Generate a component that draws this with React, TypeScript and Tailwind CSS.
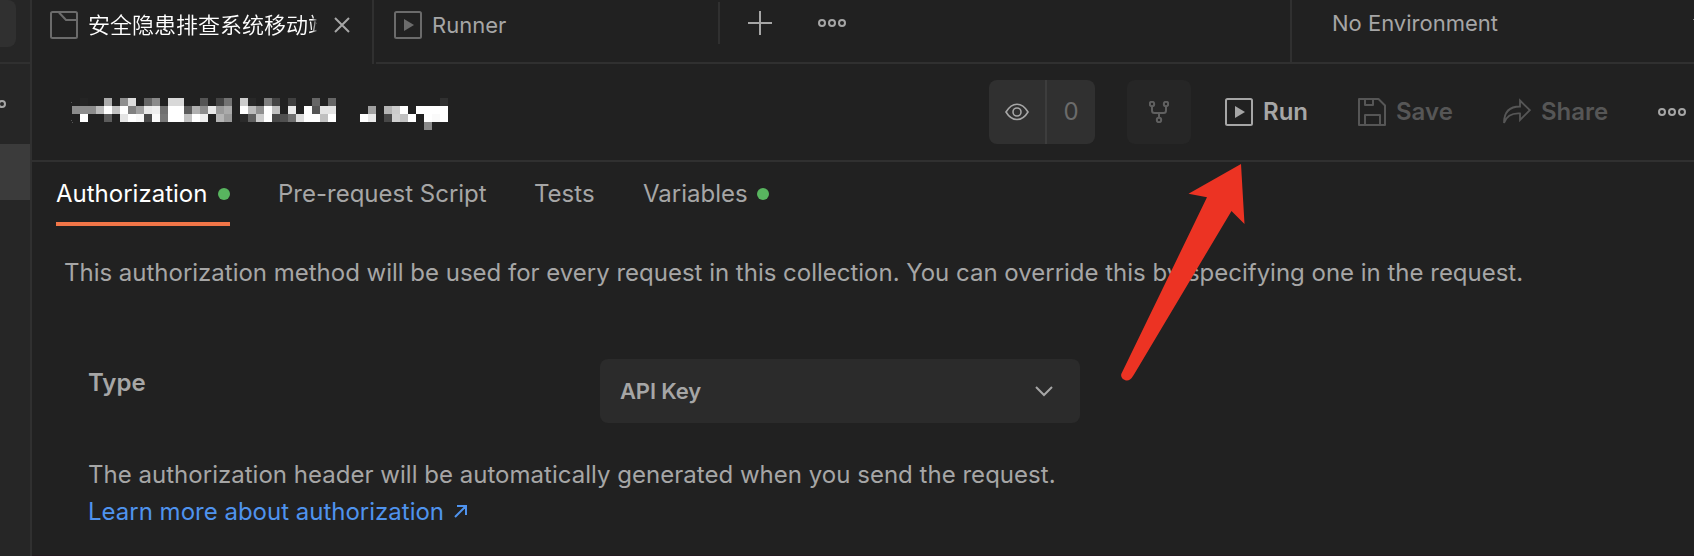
import React from "react";

type Cell = [number, string];

const mosaicRows: Cell[][] = [
  [[1, "#242424"], [4, "#ababab"], [6, "#8f8f8f"], [7, "#dddddd"], [9, "#666666"], [10, "#8a8a8a"], [12, "#d8d8d8"], [13, "#d8d8d8"], [16, "#555555"], [18, "#444444"], [19, "#737373"], [21, "#cccccc"], [22, "#282828"], [24, "#808080"], [25, "#444444"], [27, "#404040"], [30, "#666666"], [32, "#666666"], [46, "#303030"]],
  [[0, "#8c8c8c"], [1, "#8c8c8c"], [2, "#8c8c8c"], [3, "#bbbbbb"], [4, "#ffffff"], [5, "#c0c0c0"], [6, "#ffffff"], [7, "#808080"], [8, "#a0a0a0"], [9, "#e8e8e8"], [10, "#eeeeee"], [11, "#707070"], [12, "#ffffff"], [13, "#ffffff"], [14, "#5c5c5c"], [15, "#b0b0b0"], [16, "#8c8c8c"], [17, "#e8e8e8"], [18, "#999999"], [19, "#aaaaaa"], [21, "#ffffff"], [22, "#bbbbbb"], [23, "#909090"], [24, "#ffffff"], [25, "#c0c0c0"], [27, "#eaeaea"], [29, "#ffffff"], [30, "#555555"], [31, "#e4e4e4"], [32, "#e4e4e4"], [37, "#a0a0a0"], [39, "#b4b4b4"], [40, "#cccccc"], [41, "#ffffff"], [43, "#ffffff"], [44, "#ffffff"], [45, "#ffffff"], [46, "#ffffff"]],
  [[1, "#ffffff"], [4, "#5c5c5c"], [6, "#e4e4e4"], [7, "#ffffff"], [8, "#f8f8f8"], [9, "#484848"], [10, "#fafafa"], [11, "#777777"], [12, "#ffffff"], [13, "#ffffff"], [14, "#c0c0c0"], [15, "#ffffff"], [16, "#eeeeee"], [18, "#b4b4b4"], [19, "#999999"], [21, "#2a2a2a"], [22, "#606060"], [23, "#cccccc"], [24, "#ffffff"], [25, "#484848"], [26, "#505050"], [27, "#707070"], [28, "#dddddd"], [29, "#ffffff"], [30, "#ffffff"], [31, "#c0c0c0"], [32, "#ffffff"], [36, "#ffffff"], [37, "#e8e8e8"], [39, "#484848"], [40, "#d0d0d0"], [41, "#c0c0c0"], [42, "#ffffff"], [44, "#ffffff"], [45, "#fafafa"], [46, "#ffffff"]],
  [[44, "#888888"]],
];

function MaskedTitle() {
  return (
    <svg width="378" height="32" viewBox="-2 0 378 32" shapeRendering="crispEdges" className="shrink-0">
      {mosaicRows.map((row, y) =>
        row.map(([x, fill]) => <rect key={`${x}-${y}`} x={x * 8} y={y * 8} width="8" height="8" fill={fill} />),
      )}
      <path d="M-1 4h1v1h-1zM-1 22h1v1h-1zM0 24h1v1h-1z" fill="#555" />
    </svg>
  );
}

function PlayIcon({ className }: { className: string }) {
  return (
    <svg width="28" height="28" viewBox="0 0 28 28" className={className}>
      <rect x="1" y="1" width="26" height="26" rx="1.5" fill="none" stroke="currentColor" strokeWidth="2" />
      <path d="M10 8v12l10-6z" fill="currentColor" />
    </svg>
  );
}

function Dots() {
  return (
    <svg width="28" height="8" viewBox="0 0 28 8" fill="none" stroke="#a6a6a6" strokeWidth="2" className="shrink-0">
      <circle cx="4" cy="4" r="3" />
      <circle cx="14" cy="4" r="3" />
      <circle cx="24" cy="4" r="3" />
    </svg>
  );
}

function Sidebar() {
  return (
    <aside className="flex h-full w-8 shrink-0 flex-col border-r-2 border-[#303030] bg-[#262626]">
      <div className="h-16 border-b-2 border-[#303030]">
        <div className="h-[47px] w-4 rounded-r-lg bg-[#303030]" />
      </div>
      <div className="flex h-20 items-center overflow-hidden">
        <svg width="6" height="8" viewBox="0 0 6 8" fill="none" stroke="#a6a6a6" strokeWidth="2">
          <circle cx="2" cy="4" r="3" />
        </svg>
      </div>
      <div className="h-14 bg-[#3b3b3b]" />
    </aside>
  );
}

function TabBar() {
  return (
    <div className="flex h-16 shrink-0">
      <div className="flex w-[342px] border-r-2 border-[#303030] pt-[11px] pl-[18px]">
        <svg width="28" height="28" viewBox="0 0 28 28" fill="none" stroke="#6b6b6b" strokeWidth="2" className="shrink-0">
          <rect x="1" y="1" width="26" height="26" rx="1.5" />
          <path d="M9 1.500l7 7.500h11" />
        </svg>
        <div className="ml-[10px] h-7 w-[229px] overflow-hidden mask-r-from-[224px] mask-r-to-[230px] text-[22px] leading-7 font-[350] whitespace-nowrap text-white">
          安全隐患排查系统移动端
        </div>
        <svg width="16" height="16" viewBox="0 0 16 16" stroke="#a6a6a6" strokeWidth="2" className="mt-[6px] ml-[17px] shrink-0">
          <path d="M1 1l14 14M15 1L1 15" />
        </svg>
      </div>
      <div className="ml-[2px] flex flex-1 border-b-2 border-[#303030]">
        <div className="mt-[2px] flex h-[42px] w-[344px] border-r-2 border-[#303030] pt-[9px] pl-[18px]">
          <PlayIcon className="shrink-0 text-[#6b6b6b]" />
          <span className="ml-[10px] text-[22px] leading-7 text-[#a6a6a6]">Runner</span>
        </div>
        <svg width="24" height="24" viewBox="0 0 24 24" stroke="#a6a6a6" strokeWidth="2" className="mt-[11px] ml-[28px]">
          <path d="M12 0v24M0 12h24" />
        </svg>
        <div className="mt-[19px] ml-[46px] flex">
          <Dots />
        </div>
        <div className="ml-auto flex h-[62px] w-[404px] border-l-2 border-[#303030] pl-[40px]">
          <span className="pt-[9px] text-[22px] leading-7 text-[#a6a6a6]">No Environment</span>
          <svg width="1" height="2" viewBox="0 0 1 2" className="mt-[19px] ml-auto">
            <rect width="1" height="1" fill="#8a8a8a" />
          </svg>
        </div>
      </div>
    </div>
  );
}

function Header() {
  return (
    <div className="flex h-[98px] shrink-0 items-start border-b-2 border-[#303030] pl-[38px]">
      <div className="mt-[34px]">
        <MaskedTitle />
      </div>
      <div className="mt-4 ml-[541px] flex h-16 w-[106px] shrink-0 overflow-hidden rounded-lg bg-[#303030]">
        <div className="flex w-[58px] items-center justify-center border-r-2 border-[#3d3d3d]">
          <svg width="24" height="18" viewBox="0 0 24 18" fill="none" stroke="#a6a6a6" strokeWidth="1.6">
            <path d="M1 9C4 4 7.500 1.200 12 1.200S20 4 23 9C20 14 16.500 16.500 12 16.500S4 14 1 9z" />
            <circle cx="12" cy="9" r="4" />
          </svg>
        </div>
        <div className="flex flex-1 items-center justify-center text-[24px] text-[#6b6b6b]">0</div>
      </div>
      <div className="mt-4 ml-8 flex h-16 w-16 shrink-0 items-center justify-center rounded-lg bg-[#262626]">
        <svg width="20" height="22" viewBox="0 0 20 22" fill="none" stroke="#606060" strokeWidth="2">
          <circle cx="3" cy="3" r="2.200" />
          <circle cx="17" cy="3" r="2.200" />
          <circle cx="10" cy="19" r="2.200" />
          <path d="M3 5.200V9.500Q3 12 5.500 12H14.500Q17 12 17 9.500V5.200M10 12V16.800" />
        </svg>
      </div>
      <div className="mt-8 ml-[34px] flex h-8 items-center text-[24px] font-semibold text-[#a6a6a6]">
        <PlayIcon className="shrink-0" />
        <span className="ml-[10px] w-[95px]">Run</span>
      </div>
      <div className="mt-8 flex h-8 items-center text-[24px] font-semibold text-[#565656]">
        <svg width="28" height="28" viewBox="0 0 28 28" fill="none" stroke="currentColor" strokeWidth="2" strokeLinejoin="round" className="shrink-0">
          <path d="M1 1h19.500L27 7.500V27H1z" />
          <path d="M7 1v6h8V1M7 27V17h15v10" />
        </svg>
        <span className="ml-[10px] w-[107px]">Save</span>
      </div>
      <div className="mt-8 flex h-8 items-center text-[24px] font-semibold text-[#565656]">
        <svg width="28" height="28" viewBox="0 0 28 28" fill="none" stroke="currentColor" strokeWidth="1.800" className="shrink-0">
          <path d="M17 2.500L26.800 12.200L17 22V15.500C9 15 3.500 18 1 25C1 15 6 8.500 17 8.500z" />
        </svg>
        <span className="ml-[10px] w-[117px]">Share</span>
      </div>
      <div className="mt-11 flex">
        <Dots />
      </div>
    </div>
  );
}

function StatusDot() {
  return <span className="mt-[6px] h-3 w-3 rounded-full bg-[#58b55f]" />;
}

function SectionTabs() {
  return (
    <div className="flex h-16 shrink-0 pt-[20px] pl-6 text-[24px] leading-6 text-[#a6a6a6]">
      <div className="flex h-11 w-[174px] justify-between border-b-4 border-[#f27648] text-white">
        <span>Authorization</span>
        <StatusDot />
      </div>
      <span className="ml-12 w-[256px]">Pre-request Script</span>
      <span className="w-[109px]">Tests</span>
      <div className="flex w-[126px] justify-between">
        <span>Variables</span>
        <StatusDot />
      </div>
    </div>
  );
}

function Authorization() {
  return (
    <div className="flex flex-1 flex-col border-b border-[#231a20] pl-14 text-[24px] text-[#a6a6a6]">
      <p className="mt-[28px] -ml-6 h-[37px] leading-[37px] tracking-[-0.01px] whitespace-nowrap">
        This authorization method will be used for every request in this collection. You can override this by specifying one in the request.
      </p>
      <div className="mt-[68px] flex h-16">
        <span className="w-[512px] pt-[5px] leading-[37px] font-semibold">Type</span>
        <div className="flex w-[480px] items-center justify-between rounded-lg bg-[#2b2b2b] pr-[27px] pl-5 text-[22px] font-semibold tracking-[-0.15px]">
          <span>API Key</span>
          <svg width="18" height="11" viewBox="0 0 18 11" fill="none" stroke="#a6a6a6" strokeWidth="2">
            <path d="M1 1l8 8 8-8" />
          </svg>
        </div>
      </div>
      <p className="mt-[33px] leading-[37px] tracking-[0.02px]">The authorization header will be automatically generated when you send the request.</p>
      <a className="flex leading-[37px] text-[#4f93ee]">
        Learn more about authorization
        <svg width="14" height="14" viewBox="0 0 14 14" fill="none" stroke="currentColor" strokeWidth="2" className="mt-[11px] ml-[10px]">
          <path d="M1 13L12 2M3 2H12V11" />
        </svg>
      </a>
    </div>
  );
}

function PointerArrow() {
  return (
    <svg width="130" height="222" viewBox="0 0 130 222" className="pointer-events-none absolute top-[162px] left-[1118px]">
      <path
        d="M123 2L70.500 31.800L89 35.300L3.500 211.500C1.500 216 8 220.500 12 217.500Q14 216 16 212.500L113.500 49L126.500 62z"
        fill="#ec3323"
      />
    </svg>
  );
}

export default function App() {
  return (
    <div className="relative flex h-[556px] w-[1694px] overflow-hidden bg-[#212121] font-['Inter','Noto_Sans_CJK_SC',sans-serif]">
      <Sidebar />
      <main className="flex min-w-0 flex-1 flex-col">
        <TabBar />
        <Header />
        <SectionTabs />
        <Authorization />
      </main>
      <PointerArrow />
    </div>
  );
}
